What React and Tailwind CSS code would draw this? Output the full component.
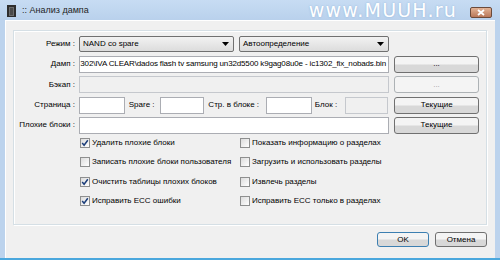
import React from 'react';

const Btn = ({ children, disabled, primary, className = '' }) => (
  <div
    className={`flex items-center justify-center rounded-[3px] border ${
      primary ? 'border-[#3c7fb1]' : disabled ? 'border-[#adb2b5]' : 'border-[#707070]'
    } ${disabled ? 'bg-[#f4f4f4] text-[#a0a0a0]' : 'bg-gradient-to-b from-[#f4f4f4] from-45% to-[#d8d8d8] to-55% text-black'} ${className}`}
  >
    {children}
  </div>
);

const Check = ({ checked, label }) => (
  <div className="flex h-[19.5px] items-center gap-[2px] whitespace-nowrap">
    <div className="flex h-[10px] w-[10px] items-center justify-center border border-[#8e8f8f] bg-gradient-to-br from-[#dcdcdc] to-white">
      {checked && (
        <svg width="8" height="8" viewBox="0 0 8 8">
          <path d="M1.2 4 L3.1 6.2 L6.8 1.3" fill="none" stroke="#1c3e7a" strokeWidth="1.5" />
        </svg>
      )}
    </div>
    <span>{label}</span>
  </div>
);

const Label = ({ children }) => (
  <div className="w-[62px] shrink-0 whitespace-nowrap pr-[4px] text-right">{children}</div>
);

const Select = ({ value, className = '' }) => (
  <div
    className={`flex h-[16px] items-center justify-between rounded-[2px] border border-[#707070] bg-gradient-to-b from-[#f2f2f2] to-[#dcdcdc] pl-[3px] pr-[4px] ${className}`}
  >
    <span>{value}</span>
    <svg width="7" height="4" viewBox="0 0 7 4">
      <path d="M0 0 H7 L3.5 4 Z" fill="#000" />
    </svg>
  </div>
);

const App = () => {
  return (
    <div className="h-[260px] w-[500px] overflow-hidden bg-[#4aa7dd] font-['Liberation_Sans',sans-serif] text-[8px] text-black">
      <div className="flex h-[258px] flex-col bg-[#bcd3ed]">
        {/* title bar */}
        <div className="flex h-[20px] items-center bg-gradient-to-b from-[#c7dcf3] to-[#b9d1ec] pl-[7px] pr-[8px]">
          <svg width="9" height="12" viewBox="0 0 9 12" className="mt-[2px]">
            <rect x="0" y="0" width="9" height="12" fill="#2d2d2d" />
            <rect x="2" y="2" width="5" height="9" fill="#6b6b6b" />
            <rect x="3" y="3" width="3" height="7" fill="#4a4a4a" />
          </svg>
          <span className="ml-[6px] mt-[2px] text-[9px] text-[#1e1e1e]">:: Анализ дампа</span>
          <span className="ml-auto mr-[13px] mt-[1px] font-['DejaVu_Sans',sans-serif] text-[19px] tracking-[1.2px] text-white [text-shadow:0_0_2px_#8fb3d9]">
            www.MUUH.ru
          </span>
          <div className="mt-[4px] flex h-[11px] w-[22px] items-center justify-center rounded-[2px] border border-[#6b4a3a] bg-gradient-to-b from-[#e3b395] to-[#b9785a]">
            <svg width="8" height="7" viewBox="0 0 8 7">
              <path d="M1 1 L7 6 M7 1 L1 6" stroke="#fff" strokeWidth="1.8" />
            </svg>
          </div>
        </div>

        {/* client */}
        <div className="mx-[5px] flex flex-1 flex-col border-l border-t border-white bg-[#f0f0f0] pb-[8px] pl-[7px] pr-[8px] pt-[9px]">
          <div className="flex h-[195px] flex-col border border-[#d5dfe5] pl-[3px] pr-[7px] pt-[3px] shadow-[inset_1px_1px_0_#fff,1px_1px_0_#fff]">
            <div className="flex h-[20px] items-center">
              <Label>Режим :</Label>
              <Select value="NAND со spare" className="w-[155px]" />
              <Select value="Автоопределение" className="ml-[5px] w-[150px]" />
            </div>
            <div className="flex h-[20px] items-center">
              <Label>Дамп :</Label>
              <div className="flex h-[17px] w-[310px] items-center justify-end overflow-hidden whitespace-nowrap border border-[#abadb3] bg-white px-[2px] tracking-[-0.15px]">
                302\IVA CLEAR\dados flash tv samsung un32d5500 k9gag08u0e - ic1302_fix_nobads.bin
              </div>
              <Btn className="ml-[5px] h-[17px] w-[85px]">...</Btn>
            </div>
            <div className="flex h-[21px] items-center">
              <Label>Бэкап :</Label>
              <div className="h-[17px] w-[310px] border border-[#c5c8cd] bg-[#f0f0f0]" />
              <Btn disabled className="ml-[5px] h-[17px] w-[85px]">...</Btn>
            </div>
            <div className="flex h-[20px] items-center">
              <Label>Страница :</Label>
              <div className="h-[17px] w-[46px] border border-[#abadb3] bg-white" />
              <span className="ml-[4px] w-[31px] whitespace-nowrap">Spare :</span>
              <div className="h-[17px] w-[45px] border border-[#abadb3] bg-white" />
              <span className="ml-[4px] w-[58px] whitespace-nowrap">Стр. в блоке :</span>
              <div className="h-[17px] w-[46px] border border-[#abadb3] bg-white" />
              <span className="ml-[3px] w-[30px] whitespace-nowrap">Блок :</span>
              <div className="h-[17px] w-[44px] border border-[#c5c8cd] bg-[#f0f0f0]" />
              <Btn className="ml-[6px] h-[17px] w-[85px]">Текущие</Btn>
            </div>
            <div className="flex h-[20px] items-center">
              <Label>Плохие блоки :</Label>
              <div className="h-[17px] w-[310px] border border-[#abadb3] bg-white" />
              <Btn className="ml-[5px] h-[17px] w-[85px]">Текущие</Btn>
            </div>

            <div className="ml-[63px] mt-[-2px] flex">
              <div className="flex w-[160px] flex-col">
                <Check checked label="Удалить плохие блоки" />
                <Check label="Записать плохие блоки пользователя" />
                <Check checked label="Очистить таблицы плохих блоков" />
                <Check checked label="Исправить ECC ошибки" />
              </div>
              <div className="flex flex-col">
                <Check label="Показать информацию о разделах" />
                <Check label="Загрузить и использовать разделы" />
                <Check label="Извлечь разделы" />
                <Check label="Исправить ECC только в разделах" />
              </div>
            </div>
          </div>

          <div className="mt-[7px] flex justify-end gap-[6px] pr-[0px]">
            <Btn primary className="h-[15px] w-[52px]">OK</Btn>
            <Btn className="h-[15px] w-[52px]">Отмена</Btn>
          </div>
        </div>
      </div>
    </div>
  );
};

export default App;
